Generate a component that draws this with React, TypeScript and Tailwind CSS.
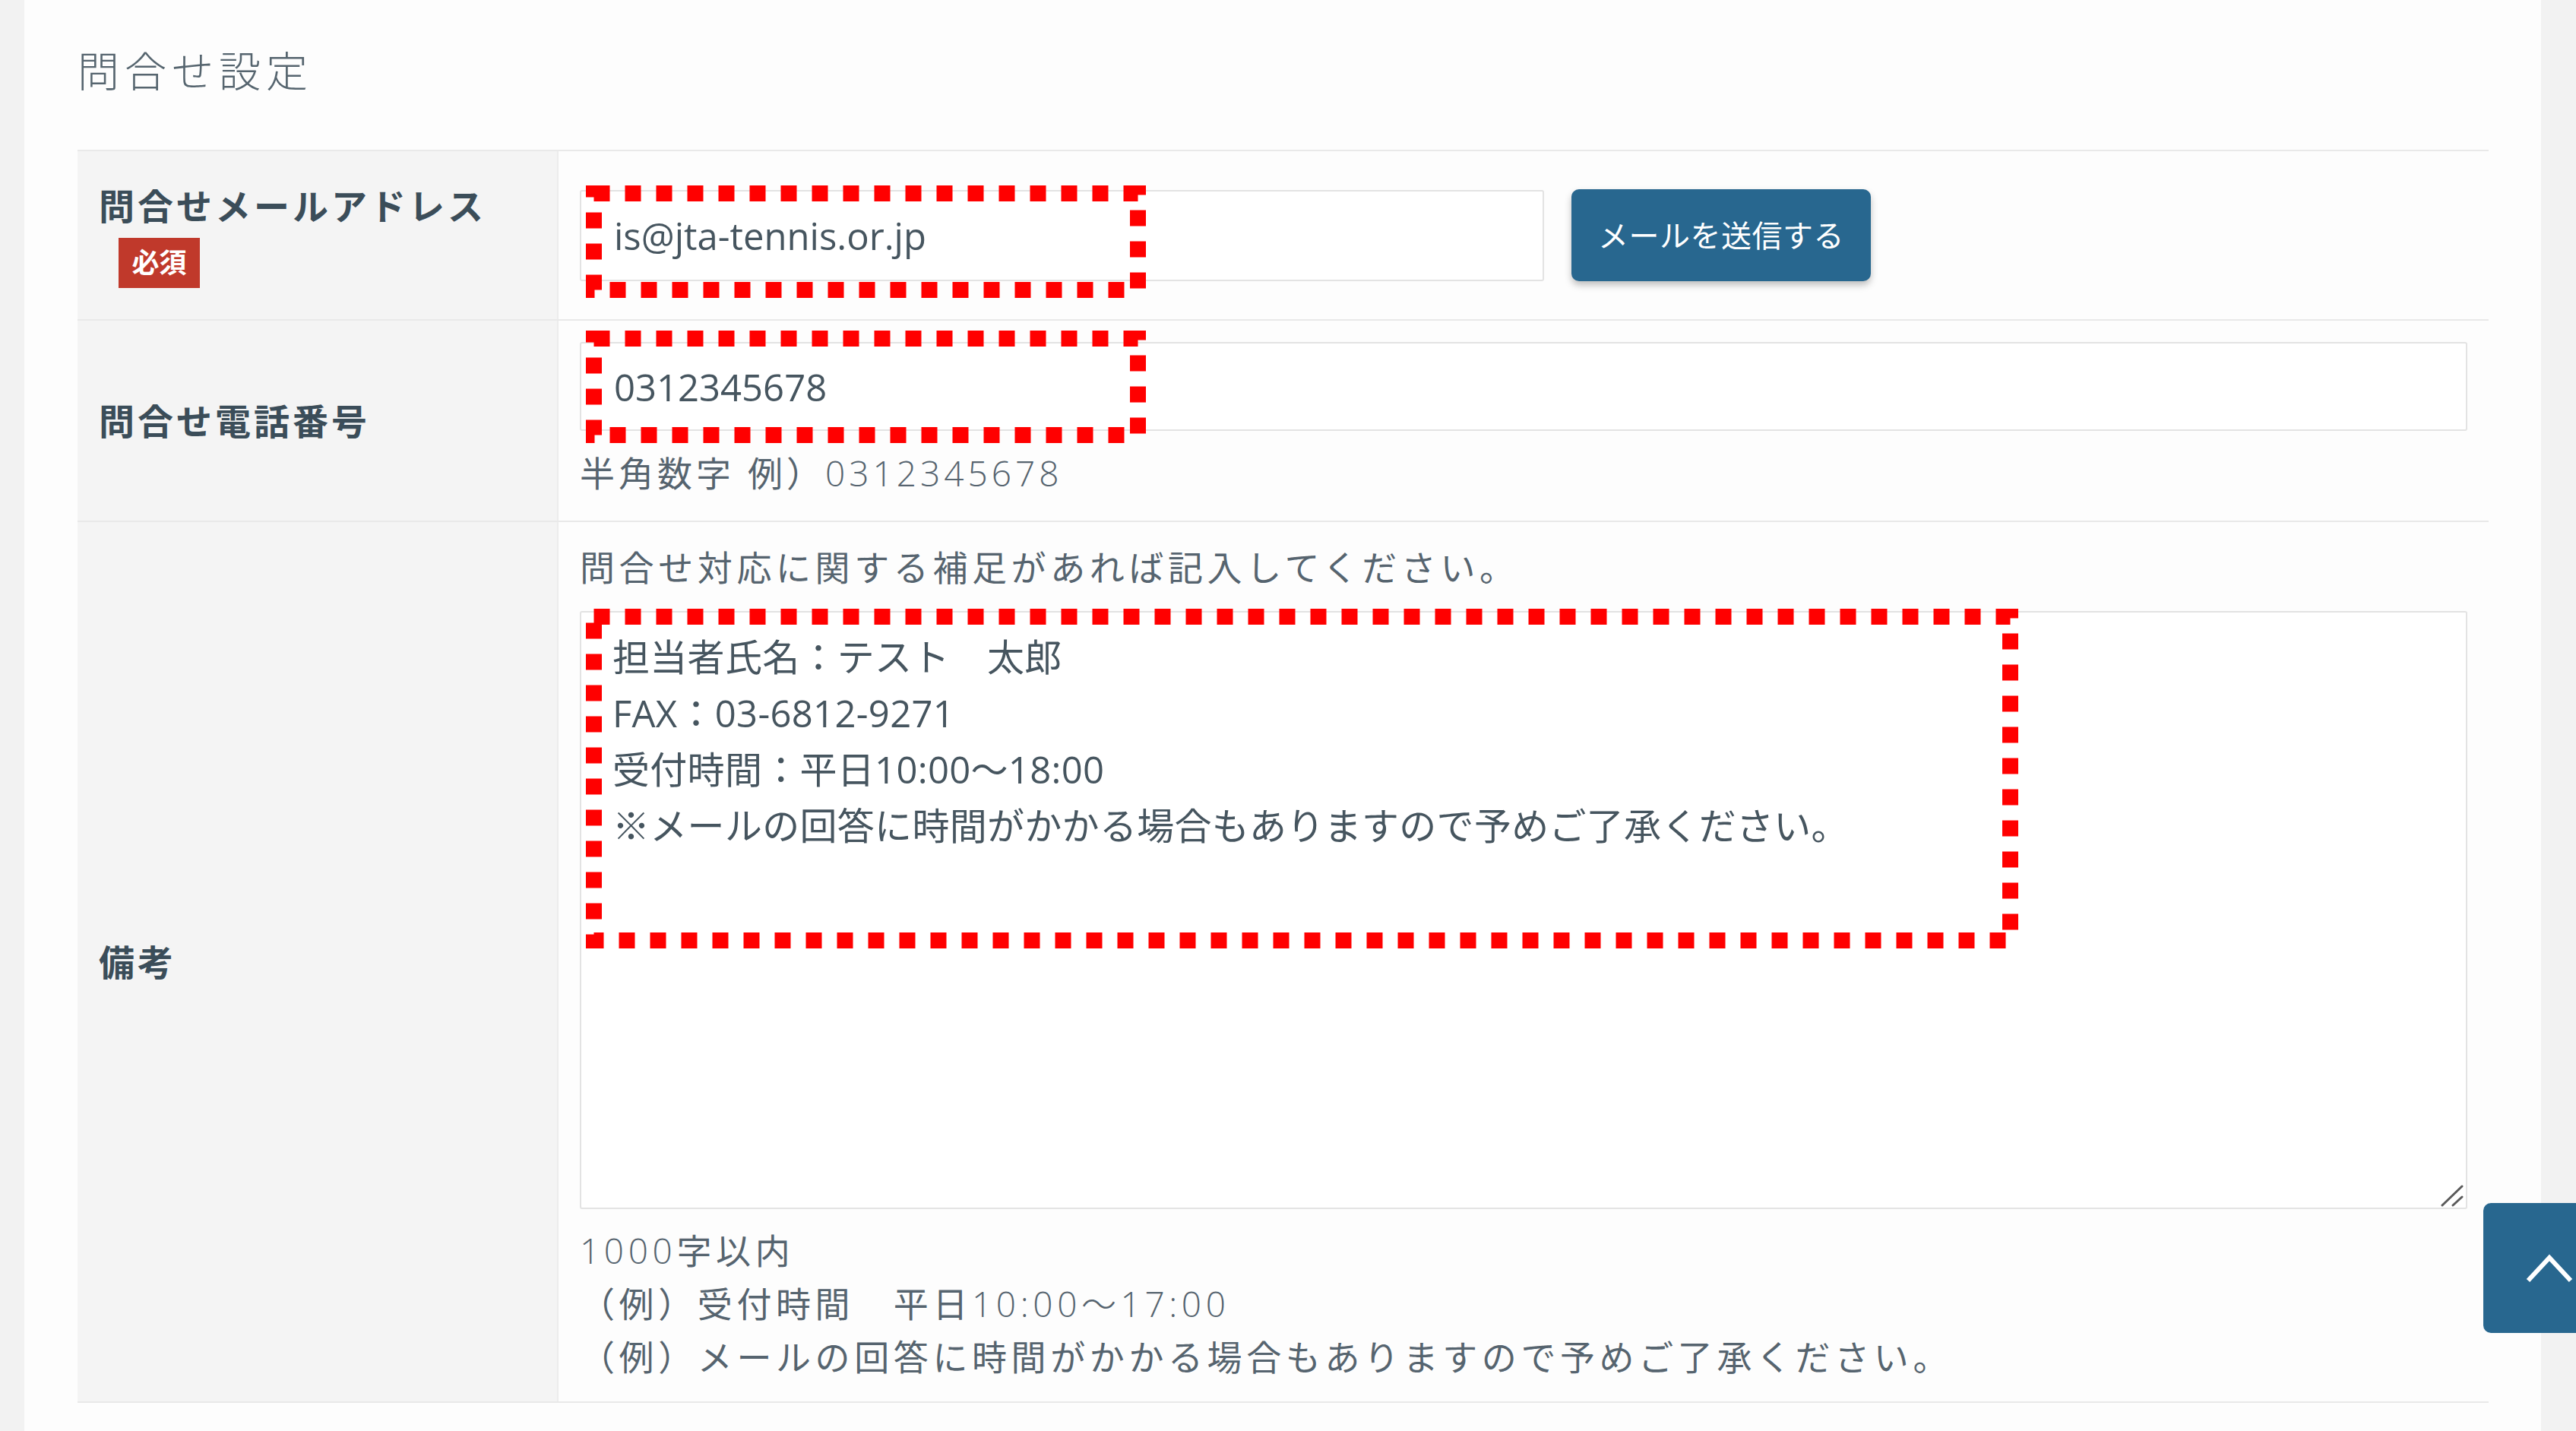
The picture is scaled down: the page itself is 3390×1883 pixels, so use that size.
import { ReactNode } from 'react';

function DotFrame({ w, h, className }: { w: number; h: number; className: string }) {
  return (
    <svg
      width={w}
      height={h}
      className={`pointer-events-none absolute ${className}`}
      aria-hidden="true"
    >
      <rect
        x={10.5}
        y={10.5}
        width={w - 21}
        height={h - 21}
        fill="none"
        stroke="#ff0000"
        strokeWidth={21}
        strokeDasharray="21 20"
      />
    </svg>
  );
}

function Label({ children }: { children: ReactNode }) {
  return (
    <div className="flex flex-col items-start justify-center border-r-2 border-[#ececec] bg-[#f4f4f4] px-[28px]">
      {children}
    </div>
  );
}

function LabelText({ children }: { children: ReactNode }) {
  return (
    <p className="text-[47px] leading-[60px] font-bold tracking-[4px] text-[#3b4d59]">{children}</p>
  );
}

// thin latin digits inside helper texts
function Num({ children }: { children: ReactNode }) {
  return <span className="font-light">{children}</span>;
}

export default function App() {
  return (
    <div className="relative flex h-[1883px] w-[3390px] overflow-hidden bg-[#f2f2f2] font-['Open_Sans','Noto_Sans_CJK_JP',sans-serif] text-[#4a5964]">
      <div className="w-[32px] shrink-0" />

      <main className="w-[3312px] shrink-0 bg-[#fdfdfd] pt-[53px] pr-[69px] pl-[70px]">
        {/* Section title */}
        <h2 className="h-[80px] text-[55px] leading-[80px] font-light tracking-[7px] text-[#56656f]">
          問合せ設定
        </h2>

        {/* Settings table */}
        <div className="mt-[64px] divide-y-2 divide-[#e9e9e9] border-y-2 border-[#e9e9e9]">
          {/* Email */}
          <div className="grid min-h-[223px] grid-cols-[633px_1fr]">
            <Label>
              <LabelText>問合せメールアドレス</LabelText>
              <span className="mt-[12px] ml-[26px] flex h-[66px] w-[107px] items-center justify-center bg-[#c0392b] text-[36px] font-bold text-white">
                必須
              </span>
            </Label>
            <div className="flex items-center gap-[36px] px-[28px]">
              <div className="relative">
                <input
                  defaultValue="is@jta-tennis.or.jp"
                  className="h-[120px] w-[1269px] rounded-[3px] border-2 border-[#e3e3e3] bg-white px-[43px] text-[49px] text-[#46555f] outline-none"
                />
                <DotFrame w={737} h={148} className="top-[-6px] left-[8px]" />
              </div>
              <button className="h-[121px] w-[394px] rounded-[10px] bg-[#28678f] text-[40px] tracking-[0.5px] text-white shadow-[0_5px_10px_rgba(0,0,0,0.25)]">
                メールを送信する
              </button>
            </div>
          </div>

          {/* Phone */}
          <div className="grid min-h-[263px] grid-cols-[633px_1fr]">
            <Label>
              <LabelText>問合せ電話番号</LabelText>
            </Label>
            <div className="px-[28px] pt-[28px] pb-[28px]">
              <div className="relative">
                <input
                  defaultValue="0312345678"
                  className="h-[117px] w-full rounded-[3px] border-2 border-[#e3e3e3] bg-white px-[43px] text-[49px] text-[#46555f] outline-none"
                />
                <DotFrame w={737} h={148} className="top-[-15px] left-[8px]" />
              </div>
              <p className="mt-[20px] text-[46px] leading-[70px] tracking-[5px] text-[#56646f]">
                半角数字 例）<Num>0312345678</Num>
              </p>
            </div>
          </div>

          {/* Notes */}
          <div className="grid min-h-[1157px] grid-cols-[633px_1fr]">
            <Label>
              <LabelText>備考</LabelText>
            </Label>
            <div className="px-[28px] pt-[24px] pb-[24px]">
              <p className="text-[46px] leading-[70px] tracking-[5.6px] text-[#56646f]">
                問合せ対応に関する補足があれば記入してください。
              </p>
              <div className="relative mt-[23px]">
                <textarea
                  defaultValue={
                    '担当者氏名：テスト　太郎\nFAX：03-6812-9271\n受付時間：平日10:00～18:00\n※メールの回答に時間がかかる場合もありますので予めご了承ください。'
                  }
                  className="block h-[787px] w-full resize-none rounded-[3px] border-2 border-[#e3e3e3] bg-white px-[41px] pt-[21px] text-[49px] leading-[74px] tracking-[0.3px] text-[#46555f] outline-none"
                />
                <svg width={30} height={30} className="pointer-events-none absolute right-[5px] bottom-[3px]" aria-hidden="true">
                  <path d="M2 28 L28 3 M16 28 L28 17" stroke="#5a5a5a" strokeWidth={3} strokeLinecap="round" fill="none" />
                </svg>
                <DotFrame w={1885} h={447} className="top-[-3px] left-[8px]" />
              </div>
              <div className="mt-[19px] text-[46px] leading-[70px] tracking-[5.6px] text-[#56646f]">
                <p>
                  <Num>1000</Num>字以内
                </p>
                <p>
                  （例）受付時間　平日<Num>10:00～17:00</Num>
                </p>
                <p>（例）メールの回答に時間がかかる場合もありますので予めご了承ください。</p>
              </div>
            </div>
          </div>
        </div>
      </main>

      {/* Page top button */}
      <button className="absolute top-[1583px] left-[3268px] flex h-[171px] w-[174px] items-center justify-center rounded-[10px] bg-[#28678f]">
        <svg width={62} height={38} viewBox="0 0 62 38" aria-hidden="true">
          <path d="M3 35 L31 5 L59 35" stroke="#ffffff" strokeWidth={6} fill="none" />
        </svg>
      </button>
    </div>
  );
}
